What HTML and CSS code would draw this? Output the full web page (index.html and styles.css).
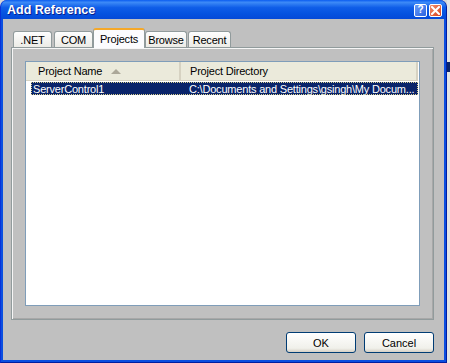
FILE: index.html
```html
<!DOCTYPE html>
<html>
<head>
<meta charset="utf-8">
<link rel="stylesheet" href="styles.css">
</head>
<body>
<div class="window">
  <div class="titlebar">
    <span class="title">Add Reference</span>
    <div class="tb-buttons">
      <span class="tb-btn help">?</span>
      <span class="tb-btn close">
        <svg width="9" height="9" viewBox="0 0 9 9"><path d="M1 1 L8 8 M8 1 L1 8" stroke="#fff" stroke-width="2" stroke-linecap="square"/></svg>
      </span>
    </div>
  </div>
  <div class="client">
    <div class="tabs">
      <span class="tab t-net">.NET</span>
      <span class="tab t-com">COM</span>
      <span class="tab active t-proj">Projects</span>
      <span class="tab t-browse">Browse</span>
      <span class="tab t-recent">Recent</span>
    </div>
    <div class="panel">
      <div class="listview">
        <div class="header">
          <div class="col col1">Project Name <span class="sort"></span></div>
          <div class="col col2">Project Directory</div>
        </div>
        <div class="row selected">
          <div class="cell cell1">ServerControl1</div>
          <div class="cell cell2">C:\Documents and Settings\gsingh\My Docum...</div>
        </div>
      </div>
    </div>
    <div class="buttons">
      <button class="btn">OK</button>
      <button class="btn">Cancel</button>
    </div>
  </div>
</div>
<div class="behind">
  <div class="band"></div>
</div>
</body>
</html>
```

FILE: styles.css
```css
html, body {
  margin: 0;
  padding: 0;
}
body {
  width: 450px;
  height: 363px;
  overflow: hidden;
  display: flex;
  font-family: "Liberation Sans", Arial, sans-serif;
  font-size: 11px;
  letter-spacing: -0.2px;
  background: #d6d6d6;
}
.window {
  width: 447px;
  height: 363px;
  display: flex;
  flex-direction: column;
  background: #0a4ee0;
  border-radius: 7px 7px 0 0;
  box-sizing: border-box;
  border-left: 1px solid #0831d9;
  border-right: 1px solid #001ea0;
  border-bottom: 1px solid #001ea0;
}
.titlebar {
  height: 19px;
  display: flex;
  align-items: center;
  justify-content: space-between;
  padding: 0 4px 0 6px;
  background: linear-gradient(#0a5cf0 0%, #3d8af7 12%, #0f5de8 40%, #0553e0 70%, #0449d8 100%);
  border-radius: 7px 7px 0 0;
}
.title {
  color: #fff;
  font-family: "Liberation Sans", Arial, sans-serif;
  font-weight: bold;
  font-size: 12.5px;
  letter-spacing: 0;
  text-shadow: 1px 1px 0 #0a1e8c;
}
.tb-buttons {
  display: flex;
  gap: 2px;
  margin-top: 1px;
}
.tb-btn {
  width: 11px;
  height: 11px;
  border: 1px solid #fff;
  border-radius: 2px;
  display: flex;
  align-items: center;
  justify-content: center;
  color: #fff;
  font-weight: bold;
  font-size: 10px;
  line-height: 1;
}
.help {
  background: linear-gradient(135deg, #6a9cf8, #2a62e0);
}
.close {
  background: linear-gradient(135deg, #f09070, #d8401c);
}
.client {
  flex: 1;
  margin: 0 2px 2px 2px;
  background: #c0c0c0;
  display: flex;
  flex-direction: column;
  padding: 9px 10px 0 8px;
}
.tabs {
  display: flex;
  align-items: flex-end;
  padding-left: 2px;
  height: 19px;
  position: relative;
  z-index: 1;
}
.tab {
  height: 16px;
  box-sizing: border-box;
  padding-top: 2px;
  text-align: center;
  border: 1px solid #919b9c;
  border-bottom: none;
  border-radius: 3px 3px 0 0;
  background: linear-gradient(#fefefe, #ecebe6);
  color: #000;
  margin-right: 2px;
}
.t-net { width: 39px; }
.t-com { width: 39px; margin-right: 0; }
.t-proj { width: 52px; }
.t-browse { width: 42px; margin-right: 1px; }
.t-recent { width: 43px; }
.tab.active {
  height: 20px;
  margin-bottom: -1px;
  padding-top: 3px;
  border-top: 2px solid #f5a829;
  background: #fcfcfe;
  margin-right: 0;
}
.panel {
  height: 273px;
  box-sizing: border-box;
  border: 1px solid #919b9c;
  box-shadow: inset 1px 1px 0 #f6f6f6, inset -1px -1px 0 #a8a8a8;
  padding: 13px;
  display: flex;
}
.listview {
  flex: 1;
  background: #fff;
  border: 1px solid #7f9db9;
}
.header {
  display: flex;
  height: 18px;
  background: #ebeadb;
  border-bottom: 1px solid #d6d2c2;
  margin-right: 1px;
}
.col {
  display: flex;
  align-items: center;
  box-sizing: border-box;
  color: #000;
  white-space: nowrap;
}
.col1 {
  width: 155px;
  padding-left: 12px;
  border-right: 2px solid #d6d2c2;
}
.col2 {
  flex: 1;
  padding-left: 9px;
  border-right: 2px solid #d6d2c2;
}
.sort {
  display: inline-block;
  width: 0;
  height: 0;
  margin-left: 9px;
  border-left: 5px solid transparent;
  border-right: 5px solid transparent;
  border-bottom: 5px solid #aca899;
}
.row {
  display: flex;
  height: 13px;
  margin: 1px 1px 0 5px;
  align-items: center;
  white-space: nowrap;
}
.row.selected {
  background: #0a246a;
  color: #fff;
  outline: 1px dotted #d8d090;
  outline-offset: -1px;
}
.cell1 {
  width: 150px;
  padding-left: 2px;
}
.cell2 {
  padding-left: 6px;
}
.buttons {
  display: flex;
  justify-content: flex-end;
  gap: 8px;
  padding-top: 12px;
  padding-right: 0;
}
.btn {
  width: 70px;
  height: 21px;
  box-sizing: border-box;
  border: 1px solid #003c74;
  border-radius: 3px;
  background: linear-gradient(#ffffff, #f0f0ea 80%, #d6d0c5);
  font-family: "Liberation Sans", Arial, sans-serif;
  font-size: 11px;
  color: #000;
  padding: 0;
}
.behind {
  width: 3px;
  height: 363px;
  background: #e4e4e4;
  display: flex;
  flex-direction: column;
}
.band {
  margin-top: 62px;
  height: 10px;
  background: #0a246a;
}
```
